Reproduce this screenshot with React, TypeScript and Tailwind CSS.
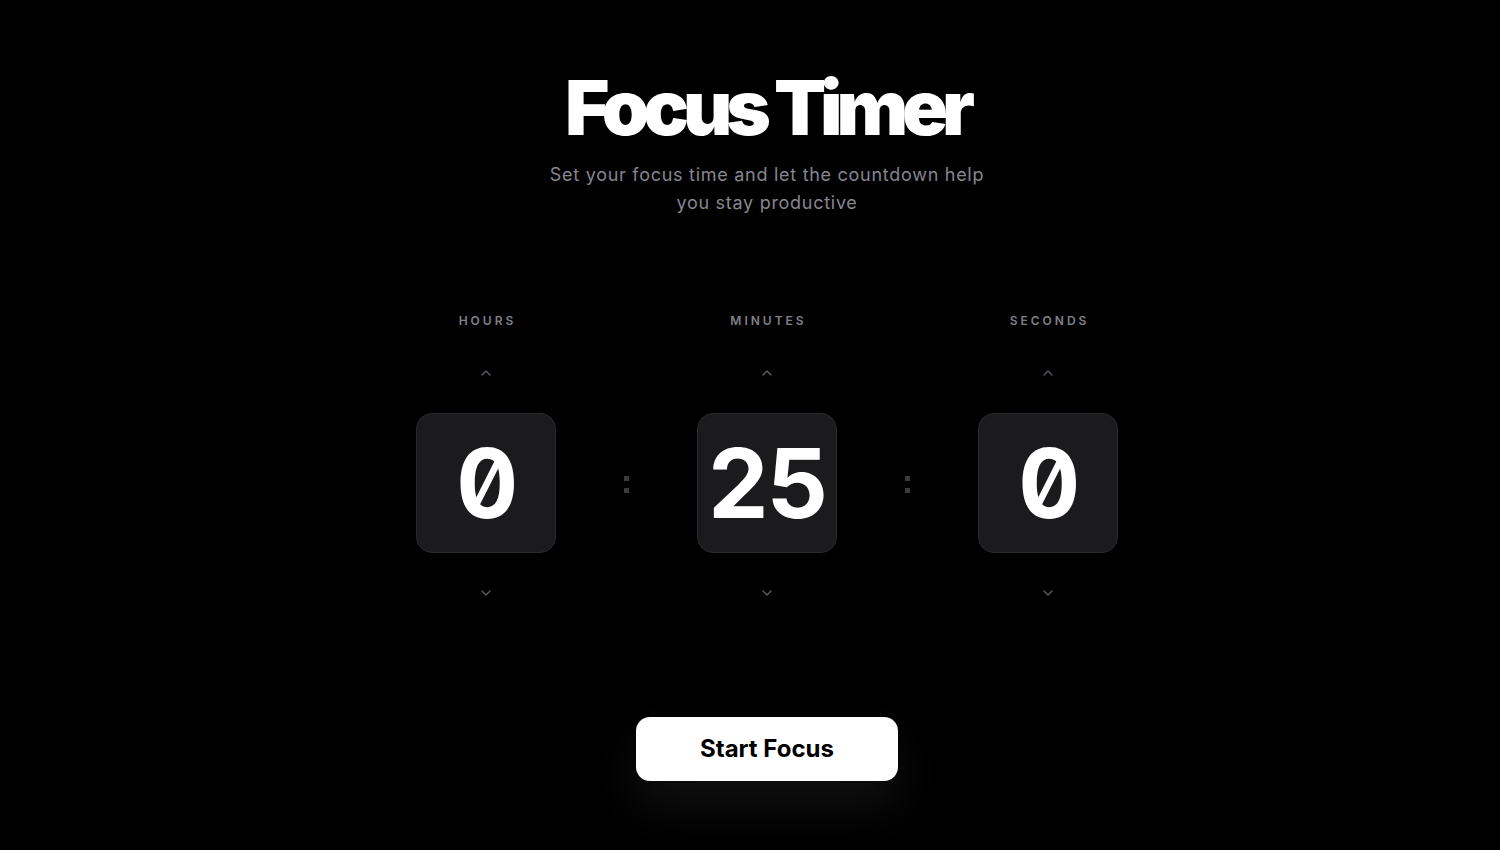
import { useState } from "react";
import { ChevronUp, ChevronDown } from "lucide-react";

type Unit = "hours" | "minutes" | "seconds";

const limits: Record<Unit, number> = { hours: 23, minutes: 59, seconds: 59 };

function TimeColumn({
  label,
  value,
  onUp,
  onDown,
}: {
  label: string;
  value: number;
  onUp: () => void;
  onDown: () => void;
}) {
  return (
    <div className="flex w-[140px] flex-col items-center">
      <span className="mt-px pl-[0.25em] text-xs font-semibold uppercase tracking-[0.25em] text-[#80808a]">
        {label}
      </span>
      <button
        onClick={onUp}
        className="mt-[28px] p-2 text-[#5c5c66] transition-colors hover:text-white"
        aria-label={`Increase ${label}`}
      >
        <ChevronUp className="h-4 w-4" strokeWidth={2} />
      </button>
      <div className="mt-6 flex h-[140px] w-[140px] items-center justify-center rounded-2xl border border-[#2a2a2e] bg-[#1b1b1e]">
        <span className="text-8xl font-bold leading-none tabular-nums slashed-zero tracking-tight text-white">
          {value}
        </span>
      </div>
      <button
        onClick={onDown}
        className="mt-6 p-2 text-[#5c5c66] transition-colors hover:text-white"
        aria-label={`Decrease ${label}`}
      >
        <ChevronDown className="h-4 w-4" strokeWidth={2} />
      </button>
    </div>
  );
}

// two square dots between the boxes
function Colon() {
  return (
    <div className="mt-[101px] flex h-[140px] w-[13px] flex-col items-center justify-center gap-[7px] pt-[3px]">
      <span className="h-[5px] w-[5px] bg-[#3b3b3f]" />
      <span className="h-[5px] w-[5px] bg-[#3b3b3f]" />
    </div>
  );
}

export default function App() {
  const [time, setTime] = useState<Record<Unit, number>>({ hours: 0, minutes: 25, seconds: 0 });

  const step = (unit: Unit, delta: number) => {
    setTime((t) => {
      const max = limits[unit];
      const next = (t[unit] + delta + max + 1) % (max + 1);
      return { ...t, [unit]: next };
    });
  };

  return (
    <div
      className="flex min-h-screen w-full flex-col items-center bg-black pl-[34px] pt-[69px] text-white"
      style={{ fontFamily: "Inter, 'Noto Sans', sans-serif" }}
    >
      <h1 className="text-[76px] font-black leading-none tracking-[-0.08em]">Focus Timer</h1>
      <p className="mt-4 max-w-[450px] text-center text-lg leading-7 tracking-[0.04em] text-[#868690]">
        Set your focus time and let the countdown help you stay productive
      </p>

      <div className="mt-[95px] flex items-start gap-16">
        <TimeColumn label="Hours" value={time.hours} onUp={() => step("hours", 1)} onDown={() => step("hours", -1)} />
        <Colon />
        <TimeColumn
          label="Minutes"
          value={time.minutes}
          onUp={() => step("minutes", 1)}
          onDown={() => step("minutes", -1)}
        />
        <Colon />
        <TimeColumn
          label="Seconds"
          value={time.seconds}
          onUp={() => step("seconds", 1)}
          onDown={() => step("seconds", -1)}
        />
      </div>

      <button className="mt-[108px] rounded-[14px] bg-white px-16 py-4 text-2xl font-bold leading-8 text-black shadow-[0_24px_50px_rgba(255,255,255,0.07)]">
        Start Focus
      </button>
    </div>
  );
}
